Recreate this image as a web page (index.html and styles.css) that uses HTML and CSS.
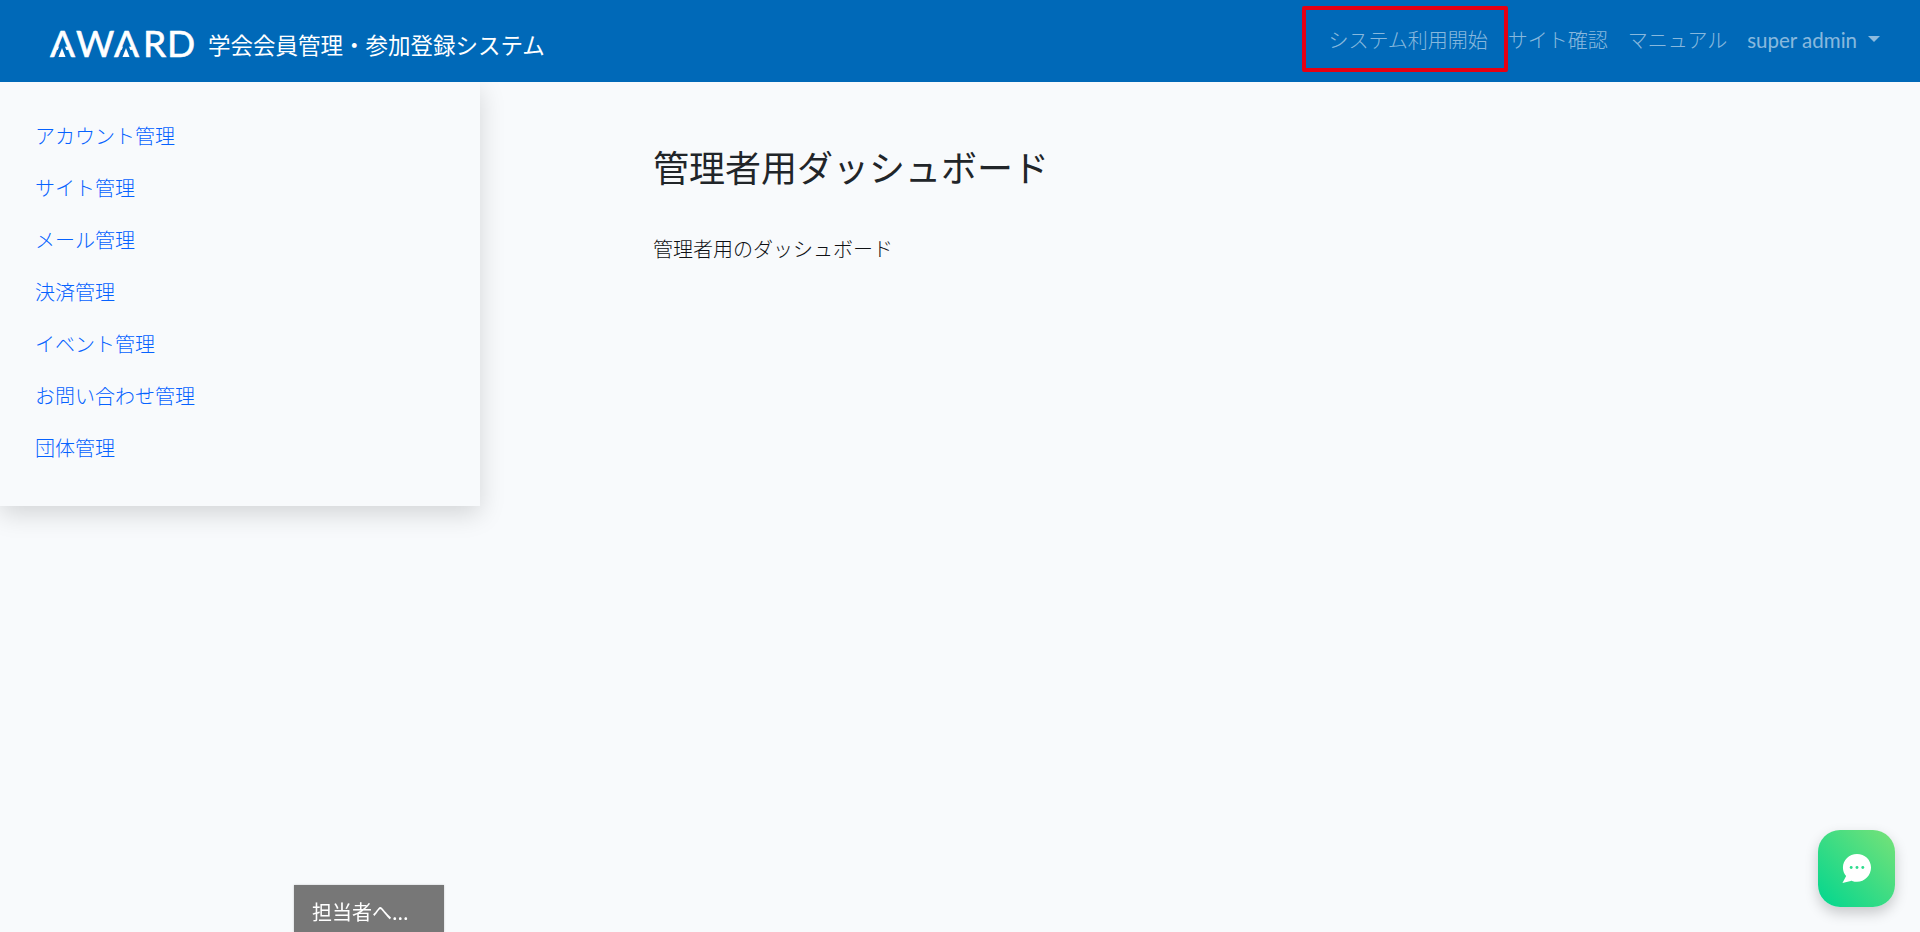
FILE: index.html
```html
<!DOCTYPE html>
<html lang="ja">
<head>
<meta charset="utf-8">
<title>学会会員管理・参加登録システム</title>
<link rel="stylesheet" href="styles.css">
</head>
<body>
<header class="navbar">
  <a class="brand" href="#">
    <svg class="logo" viewBox="0 0 144 30" width="144" height="30" role="img" aria-label="AWARD">
      <text class="logo-text" x="0 26 64 93 117" y="28">AWARD</text>
      <polygon class="logo-cut" points="12,9.500 19,28.500 5,28.500"/>
      <polygon class="logo-mark" points="12,19 15.500,28 8.500,28"/>
      <polygon class="logo-cut" points="76,9.500 83,28.500 69,28.500"/>
      <polygon class="logo-mark" points="76,19 79.500,28 72.500,28"/>
    </svg>
    <span class="brand-name">学会会員管理・参加登録システム</span>
  </a>
  <nav class="nav">
    <a class="nav-link nav-link-marked" href="#">システム利用開始</a>
    <a class="nav-link" href="#">サイト確認</a>
    <a class="nav-link" href="#">マニュアル</a>
    <a class="nav-link nav-user" href="#">super admin<span class="caret"></span></a>
  </nav>
</header>
<div class="layout">
  <aside class="sidebar">
    <ul class="menu">
      <li><a href="#">アカウント管理</a></li>
      <li><a href="#">サイト管理</a></li>
      <li><a href="#">メール管理</a></li>
      <li><a href="#">決済管理</a></li>
      <li><a href="#">イベント管理</a></li>
      <li><a href="#">お問い合わせ管理</a></li>
      <li><a href="#">団体管理</a></li>
    </ul>
  </aside>
  <main class="content">
    <h1 class="title">管理者用ダッシュボード</h1>
    <p class="lead">管理者用のダッシュボード</p>
  </main>
</div>
<div class="contact-tab">担当者へ...</div>
<button class="chat" type="button" aria-label="チャット">
  <svg viewBox="0 0 32 32" width="31" height="31">
    <path class="bubble" d="M16.5 1C8.5 1 2 7.3 2 15c0 3.400 1.200 6.400 3.300 8.800L1.500 31l8.500-2.200c.5-.2 1-.2 1.500 0 1.600.6 3.300 1 5 1 8 0 14.500-6.700 14.500-14.800S24.500 1 16.500 1z"/>
    <circle class="dot" cx="10.500" cy="15" r="1.500"/>
    <circle class="dot" cx="16.500" cy="15" r="1.500"/>
    <circle class="dot" cx="22.500" cy="15" r="1.500"/>
  </svg>
</button>
</body>
</html>
```
FILE: styles.css
```css
* { box-sizing: border-box; }
html, body { height: 100%; }
body {
  margin: 0;
  background: #f8fafc;
  color: #0f1114;
  font-family: "Noto Sans CJK JP", "Noto Sans", sans-serif;
  font-size: 20px;
  font-weight: 300;
  overflow: hidden;
}
a { text-decoration: none; }
.navbar {
  height: 82px;
  background: #0069b8;
  display: flex;
  align-items: center;
  justify-content: space-between;
  padding: 0 30px 0 50px;
  position: relative;
  z-index: 2;
}
.brand {
  display: flex;
  align-items: center;
  gap: 14px;
  color: #fff;
  padding-top: 6px;
}
.logo { display: block; overflow: visible; }
.logo-text {
  font-family: "Lato", sans-serif;
  font-size: 37px;
  font-weight: 400;
  fill: #fff;
  stroke: #fff;
  stroke-width: .6px;
}
.logo-cut { fill: #0069b8; }
.logo-mark { fill: #fff; }
.brand-name { font-size: 22.5px; font-weight: 400; line-height: 30px; }
.nav { display: flex; align-items: center; padding-bottom: 2px; }
.nav-link {
  color: rgba(255, 255, 255, .55);
  padding: 0 10px;
  line-height: 30px;
  display: block;
}
.nav-link-marked { position: relative; }
.nav-link-marked::after {
  content: "";
  position: absolute;
  left: -16px;
  right: -10px;
  top: -19px;
  bottom: -17px;
  border: 4px solid #e60012;
  border-radius: 2px;
}
.nav-user {
  font-family: "Lato", sans-serif;
  font-size: 20.5px;
  font-weight: 400;
  display: flex;
  align-items: center;
}
.caret {
  width: 0;
  height: 0;
  margin-left: 11px;
  margin-top: -3px;
  border-top: 6px solid currentColor;
  border-left: 6px solid transparent;
  border-right: 6px solid transparent;
}
.layout { display: flex; align-items: flex-start; }
.sidebar {
  width: 480px;
  height: 424px;
  background: #f8fafc;
  box-shadow: 0 8px 24px rgba(0, 0, 0, .15);
  padding-top: 28px;
  flex: none;
}
.menu { list-style: none; margin: 0; padding: 0; }
.menu a {
  display: block;
  height: 52px;
  line-height: 52px;
  padding-left: 35px;
  color: #0662ff;
}
.content { padding: 59px 0 0 173px; }
.title {
  margin: 0 0 43px;
  color: #212529;
  font-size: 36px;
  font-weight: 400;
  line-height: 50px;
}
.lead { margin: 0; line-height: 30px; }
.contact-tab {
  position: fixed;
  left: 294px;
  bottom: 0;
  width: 150px;
  height: 47px;
  background: #777;
  color: #fff;
  padding: 9px 0 0 18px;
  line-height: 36px;
  font-weight: 400;
  box-shadow: 0 0 2px rgba(0, 0, 0, .2);
}
.chat {
  position: fixed;
  left: 1818px;
  top: 830px;
  width: 77px;
  height: 77px;
  border: 0;
  border-radius: 22px;
  padding: 0;
  background: linear-gradient(45deg, #00d68f 0%, #78e278 100%);
  box-shadow: 0 6px 14px rgba(0, 0, 0, .2);
  display: flex;
  align-items: center;
  justify-content: center;
}
.bubble { fill: #fff; }
.dot { fill: #2fdc8e; }
```
